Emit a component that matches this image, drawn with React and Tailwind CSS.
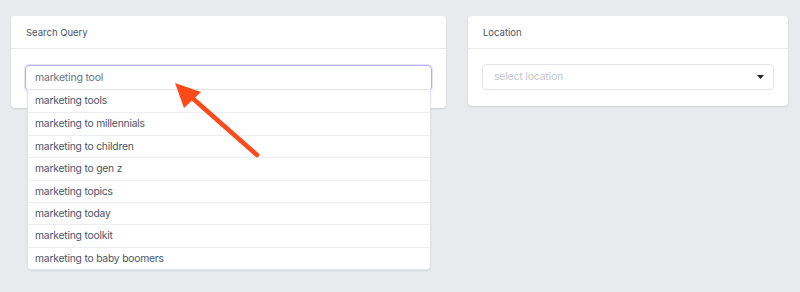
import { useState } from 'react'

const SUGGESTIONS = [
  'marketing tools',
  'marketing to millennials',
  'marketing to children',
  'marketing to gen z',
  'marketing topics',
  'marketing today',
  'marketing toolkit',
  'marketing to baby boomers',
]

export default function App() {
  const [query, setQuery] = useState('marketing tool')

  return (
    <div
      className="relative w-[800px] h-[292px] bg-[#e9eaed] overflow-hidden"
      style={{ fontFamily: 'Inter, "Noto Sans", sans-serif' }}
    >
      <div className="flex items-start gap-[22px] pl-[11px] pt-4">
        {/* Search query card */}
        <div className="w-[435px] bg-white rounded shadow-[0_1px_2px_rgba(0,0,0,0.12)]">
          <div className="h-[33px] flex items-center px-[15px] pt-[2px] border-b border-[#e8eaee] text-[9.5px] text-[#4a5568]">
            Search Query
          </div>
          <div className="px-[14px] pt-[14px] pb-[17px]">
            <div className="relative">
              <input
                value={query}
                onChange={(e) => setQuery(e.target.value)}
                className="w-full h-[26px] px-[9px] rounded border border-[#b3aefa] shadow-[0_0_0_1px_rgba(180,174,250,0.35)] text-[10.5px] tracking-[-0.2px] text-[#6b7280] outline-none"
              />
              <ul className="absolute left-[2px] right-[1px] top-[26px] z-10 bg-white rounded-b border border-[#e2e5ea] shadow-[0_1px_2px_rgba(0,0,0,0.08)]">
                {SUGGESTIONS.map((s, i) => (
                  <li
                    key={s}
                    className={`h-[22.4px] flex items-center px-[7px] text-[10.3px] tracking-[-0.2px] text-[#4a5568] ${
                      i > 0 ? 'border-t border-[#eceef1]' : ''
                    }`}
                  >
                    {s}
                  </li>
                ))}
              </ul>
            </div>
          </div>
        </div>

        {/* Location card */}
        <div className="w-[320px] bg-white rounded shadow-[0_1px_2px_rgba(0,0,0,0.12)]">
          <div className="h-[33px] flex items-center px-[15px] pt-[2px] border-b border-[#e8eaee] text-[9.5px] text-[#4a5568]">
            Location
          </div>
          <div className="px-[14px] pt-[15px] pb-[16px]">
            <div className="h-[26px] flex items-center justify-between pl-[11px] pr-[9px] rounded border border-[#e2e5ea] text-[10.5px] tracking-[-0.2px] text-[#c2c6cc]">
              <span>select location</span>
              <svg width="7" height="4" viewBox="0 0 7 4">
                <path d="M0 0h7L3.5 4z" fill="#222" />
              </svg>
            </div>
          </div>
        </div>
      </div>

      {/* annotation arrow */}
      <svg
        className="absolute left-0 top-0 z-20 pointer-events-none"
        width="800"
        height="292"
        viewBox="0 0 800 292"
      >
        <line x1="257" y1="155" x2="190" y2="96" stroke="#fc4a1a" strokeWidth="4.5" strokeLinecap="round" />
        <polygon points="175,83 201,92 184,108" fill="#fc4a1a" />
      </svg>
    </div>
  )
}
